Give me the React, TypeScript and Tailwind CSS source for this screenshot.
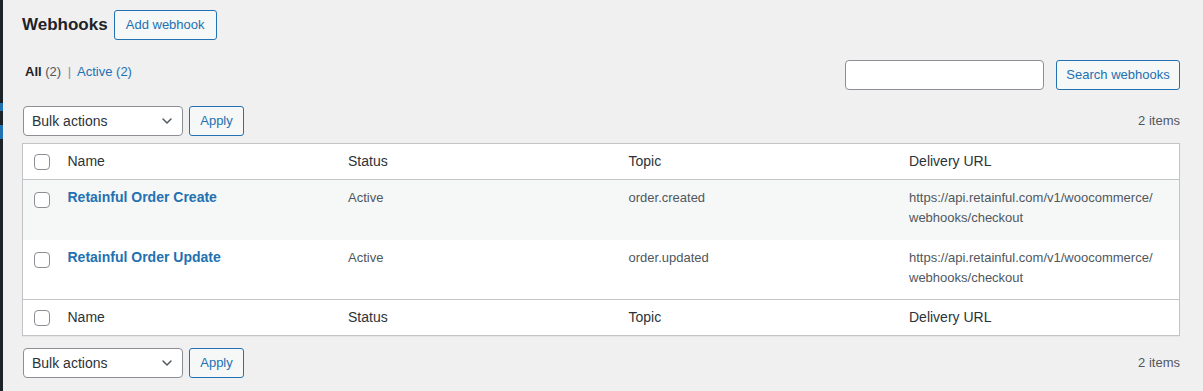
import { ChevronDown } from "lucide-react";

const rows = [
  { name: "Retainful Order Create", status: "Active", topic: "order.created", url: ["https://api.retainful.com/v1/woocommerce/", "webhooks/checkout"] },
  { name: "Retainful Order Update", status: "Active", topic: "order.updated", url: ["https://api.retainful.com/v1/woocommerce/", "webhooks/checkout"] },
];

function Checkbox() {
  return <span className="block h-4 w-4 rounded-[4px] border border-[#8c8f94] bg-white" />;
}

function BulkBar() {
  return (
    <div className="flex items-center justify-between">
      <div className="flex items-center gap-[6px]">
        <div className="flex h-[30px] w-[160px] items-center justify-between rounded-[4px] border border-[#8c8f94] bg-white pl-[8px] pr-[7px] text-[14px] text-[#2c3338]">
          <span>Bulk actions</span>
          <ChevronDown size={16} strokeWidth={2.2} className="text-[#50575e]" />
        </div>
        <button className="h-[30px] w-[55px] rounded-[3px] border border-[#2271b1] bg-[#f6f7f7] text-[13px] text-[#2271b1]">Apply</button>
      </div>
      <span className="text-[13px] text-[#50575e]">2 items</span>
    </div>
  );
}

function HeadRow({ top }: { top?: boolean }) {
  return (
    <tr className={top ? "border-b border-[#c3c4c7]" : "border-t border-[#c3c4c7]"}>
      <td className="h-[36px] w-[35px] pl-[11px] align-middle"><Checkbox /></td>
      {["Name", "Status", "Topic", "Delivery URL"].map((h) => (
        <td key={h} className="px-[10px] align-middle text-[14px] text-[#2c3338]">{h}</td>
      ))}
    </tr>
  );
}

export default function App() {
  return (
    <div className="flex h-[391px] w-[1203px] bg-[#f0f0f1] font-['Liberation_Sans',sans-serif]">
      <div className="flex w-[3px] flex-col bg-[#1d2327]">
        <div className="mt-[103px] h-[8px] bg-[#2271b1]" />
        <div className="mt-[14px] h-[14px] bg-[#2271b1]" />
      </div>
      <div className="flex-1 pl-[19px] pr-[23px]">
        <div className="flex items-center gap-[6px] pt-[10px]">
          <h2 className="text-[17px] font-semibold text-[#1d2327]">Webhooks</h2>
          <button className="h-[30px] w-[103px] rounded-[3px] border border-[#2271b1] bg-[#f6f7f7] text-[13px] text-[#2271b1]">Add webhook</button>
        </div>
        <div className="flex items-start justify-between pt-[20px]">
          <div className="pt-[2px] pl-[3px] text-[13px] text-[#50575e]">
            <span className="font-semibold text-[#1d2327]">All</span> (2) <span className="mx-[3px] text-[#8c8f94]">|</span>{" "}
            <span className="text-[#2271b1]">Active (2)</span>
          </div>
          <div className="flex items-center gap-[12px]">
            <div className="h-[30px] w-[199px] rounded-[4px] border border-[#8c8f94] bg-white" />
            <button className="h-[30px] w-[124px] rounded-[3px] border border-[#2271b1] bg-[#f6f7f7] text-[13px] text-[#2271b1]">Search webhooks</button>
          </div>
        </div>
        <div className="pt-[16px] pb-[7px] pl-[1px]">
          <BulkBar />
        </div>
        <table className="w-full table-fixed border border-[#c3c4c7] bg-white shadow-[0_1px_1px_rgba(0,0,0,0.04)]">
          <colgroup>
            <col className="w-[35px]" />
            <col />
            <col />
            <col />
            <col />
          </colgroup>
          <thead><HeadRow top /></thead>
          <tbody>
            {rows.map((r, i) => (
              <tr key={r.name} className={i === 0 ? "bg-[#f6f7f7]" : "bg-white"}>
                <td className="h-[60px] pl-[11px] pt-[12px] align-top"><Checkbox /></td>
                <td className="px-[10px] pt-[7px] align-top text-[14px] font-bold text-[#2271b1]">{r.name}</td>
                <td className="px-[10px] pt-[8px] align-top text-[13px] leading-[20px] text-[#50575e]">{r.status}</td>
                <td className="px-[10px] pt-[8px] align-top text-[13px] leading-[20px] text-[#50575e]">{r.topic}</td>
                <td className="px-[10px] pt-[8px] align-top text-[13px] leading-[20px] text-[#50575e]">
                  {r.url[0]}
                  <br />
                  {r.url[1]}
                </td>
              </tr>
            ))}
          </tbody>
          <tfoot><HeadRow /></tfoot>
        </table>
        <div className="pt-[12px] pl-[1px]">
          <BulkBar />
        </div>
      </div>
    </div>
  );
}
